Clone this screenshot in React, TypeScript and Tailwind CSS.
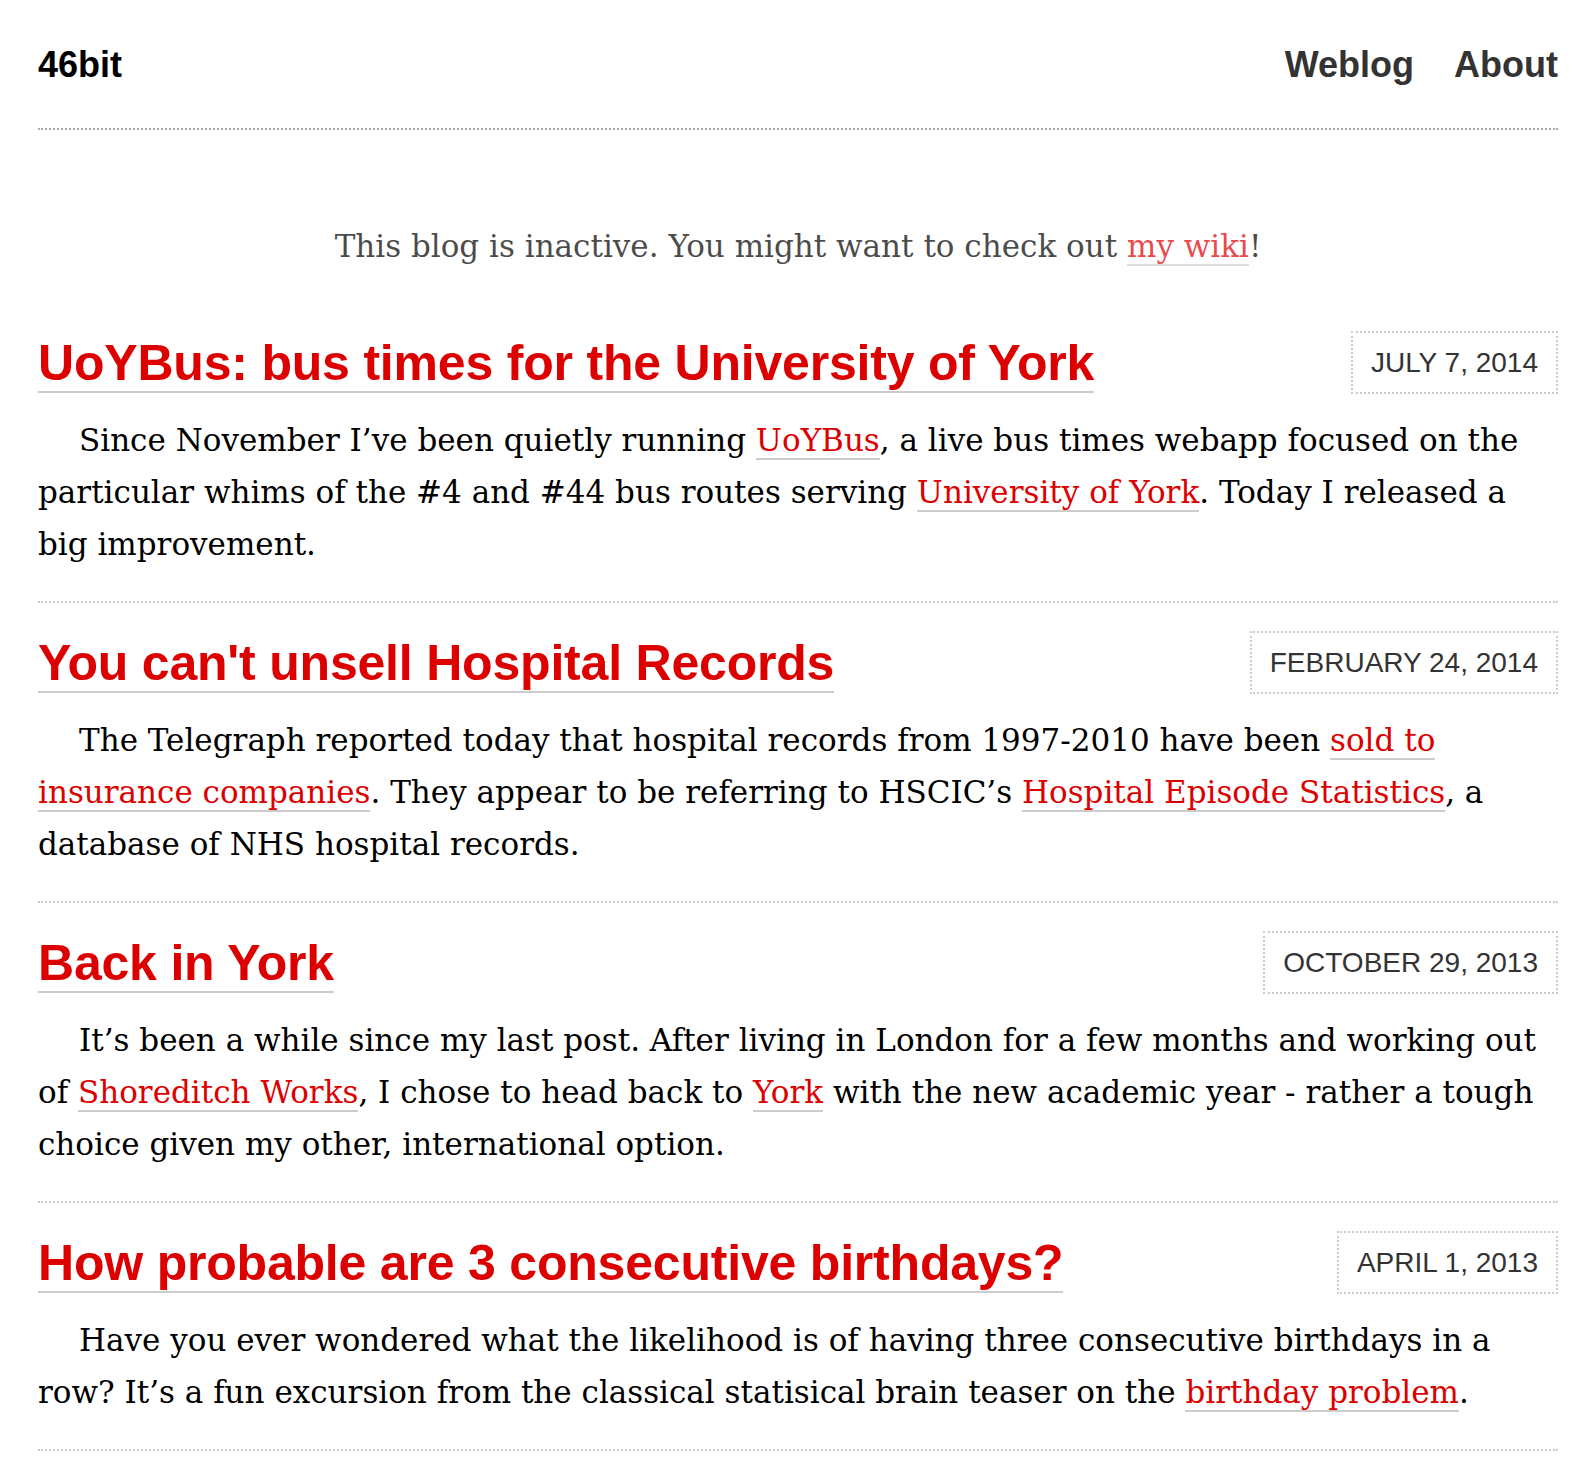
const serif = "font-['DejaVu_Serif',Georgia,serif]"
const sans = "font-['Liberation_Sans',Helvetica,Arial,sans-serif]"

function A({ children }: { children: React.ReactNode }) {
  return (
    <a href="#" className="text-[#dd0000] border-b-2 border-[#cccccc]">
      {children}
    </a>
  )
}

interface PostProps {
  title: string
  date: string
  children: React.ReactNode
  first?: boolean
}

function Post({ title, date, children, first }: PostProps) {
  return (
    <article className={`border-b-2 border-dotted border-[#cccccc] pb-[31px] ${first ? 'pt-[59px]' : 'pt-[28px]'}`}>
      <header className="flex items-start justify-between">
        <h2 className={`${sans} mt-[4px] text-[50px] leading-[56px] font-bold text-[#dd0000] border-b-2 border-[#cccccc] tracking-[-0.2px]`}>
          <a href="#">{title}</a>
        </h2>
        <div className={`${sans} shrink-0 border-2 border-dotted border-[#cccccc] px-[18px] h-[63px] flex items-center text-[28px] text-[#333333] uppercase`}>
          {date}
        </div>
      </header>
      <p className={`${serif} mt-[20px] text-[31px] leading-[52px] text-black indent-[41px]`}>{children}</p>
    </article>
  )
}

export default function App() {
  return (
    <div className="bg-white min-h-screen pl-[38px] pr-[34px]">
      <nav className={`${sans} flex items-center justify-between pt-[44px] pb-[42px] border-b-2 border-dotted border-[#aaaaaa] text-[36px] leading-[42px] font-bold`}>
        <a href="#" className="text-black">46bit</a>
        <div className="flex gap-[40px] text-[#333333]">
          <a href="#">Weblog</a>
          <a href="#">About</a>
        </div>
      </nav>

      <p className={`${serif} mt-[90px] text-center text-[31px] leading-[52px] text-black opacity-70`}>
        This blog is inactive. You might want to check out <A>my wiki</A>!
      </p>

      <Post first title="UoYBus: bus times for the University of York" date="July 7, 2014">
        Since November I’ve been quietly running <A>UoYBus</A>, a live bus times webapp focused on the particular
        whims of the #4 and #44 bus routes serving <A>University of York</A>. Today I released a big improvement.
      </Post>

      <Post title="You can't unsell Hospital Records" date="February 24, 2014">
        The Telegraph reported today that hospital records from 1997-2010 have been <A>sold to insurance companies</A>.
        They appear to be referring to HSCIC’s <A>Hospital Episode Statistics</A>, a database of NHS hospital records.
      </Post>

      <Post title="Back in York" date="October 29, 2013">
        It’s been a while since my last post. After living in London for a few months and working out of{' '}
        <A>Shoreditch Works</A>, I chose to head back to <A>York</A> with the new academic year - rather a tough
        choice given my other, international option.
      </Post>

      <Post title="How probable are 3 consecutive birthdays?" date="April 1, 2013">
        Have you ever wondered what the likelihood is of having three consecutive birthdays in a row? It’s a fun
        excursion from the classical statisical brain teaser on the <A>birthday problem</A>.
      </Post>
    </div>
  )
}
